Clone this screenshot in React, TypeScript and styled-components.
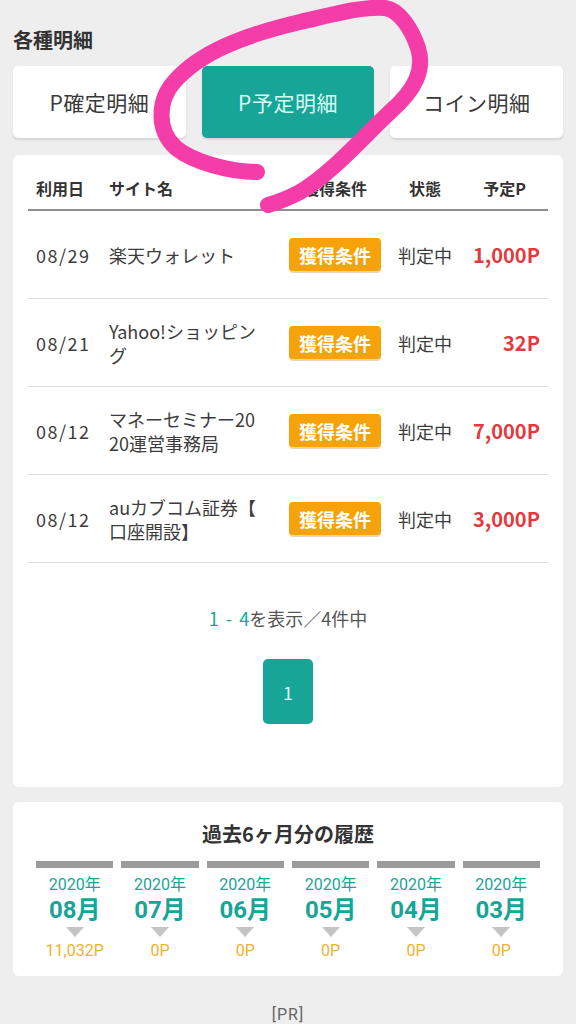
import React from "react";
import styled, { createGlobalStyle } from "styled-components";

const GlobalStyle = createGlobalStyle`
  html, body {
    margin: 0;
    padding: 0;
    background: #eeeeee;
  }
  body {
    font-family: "Noto Sans CJK JP", "Noto Sans", sans-serif;
    color: #333;
  }
  * { box-sizing: border-box; }
`;

const TEAL = "#17a597";
const COMPACT = `Roboto, "Noto Sans CJK JP", sans-serif`;

const Page = styled.div`
  position: relative;
  width: 576px;
  min-height: 1024px;
  padding: 22px 13px 0;
  overflow: hidden;
`;

const SectionTitle = styled.h2`
  margin: 0 0 8px;
  font-size: 20px;
  line-height: 36px;
  font-weight: 700;
  color: #333;
`;

const Tabs = styled.div`
  display: grid;
  grid-template-columns: repeat(3, 1fr);
  gap: 16px;
  margin-bottom: 17px;
`;

const Tab = styled.div<{ $active?: boolean }>`
  height: 72px;
  display: flex;
  align-items: center;
  justify-content: center;
  border-radius: 5px;
  background: ${(p) => (p.$active ? TEAL : "#fff")};
  color: ${(p) => (p.$active ? "#d9fbf4" : "#3a3a3a")};
  font-size: 21px;
  letter-spacing: 0.5px;
  box-shadow: 0 2px 2px rgba(0, 0, 0, 0.1);
`;

const Card = styled.div`
  background: #fff;
  border-radius: 6px;
  padding: 0 15px 63px;
`;

const cols = "81px 172px 108px 72px 1fr";

const HeadRow = styled.div`
  display: grid;
  grid-template-columns: ${cols};
  padding: 22px 0 10px;
  border-bottom: 2px solid #8e8e8e;
  font-size: 16px;
  line-height: 22px;
  font-weight: 700;
  color: #333;
`;

const HeadCell = styled.div<{ $align?: string }>`
  text-align: ${(p) => p.$align || "left"};
  padding-left: ${(p) => (p.$align === "left" || !p.$align ? "8px" : "0")};
  &:nth-child(2) { padding-left: 0; }
`;

const Row = styled.div`
  display: grid;
  grid-template-columns: ${cols};
  align-items: center;
  height: 88px;
  border-bottom: 1px solid #dcdcdc;
  color: #3c3c3c;
`;

const DateCell = styled.div`
  padding-left: 8px;
  font-size: 18px;
  letter-spacing: 1.5px;
`;

const SiteCell = styled.div`
  padding-right: 22px;
  font-size: 18px;
  line-height: 24px;
  word-break: break-all;
  line-break: anywhere;
`;

const BadgeCell = styled.div`
  display: flex;
  justify-content: center;
`;

const Badge = styled.span`
  display: inline-flex;
  align-items: center;
  justify-content: center;
  width: 92px;
  height: 33px;
  border-radius: 4px;
  background: #f6a30b;
  color: #fff;
  font-size: 18px;
  font-weight: 700;
  box-shadow: 0 2px 1px rgba(150, 110, 40, 0.3);
`;

const StatusCell = styled.div`
  text-align: center;
  font-size: 18px;
`;

const PointCell = styled.div`
  text-align: right;
  padding-right: 8px;
  font-size: 20px;
  font-weight: 700;
  color: #e4393f;
`;

const Summary = styled.div`
  margin-top: 43px;
  text-align: center;
  font-size: 18px;
  line-height: 24px;
  color: #555;
`;

const Accent = styled.span`
  color: ${TEAL};
  word-spacing: 3px;
`;

const Pager = styled.div`
  display: flex;
  justify-content: center;
  margin-top: 29px;
`;

const PageButton = styled.div`
  width: 50px;
  height: 65px;
  border-radius: 5px;
  background: ${TEAL};
  color: #d9fbf4;
  font-size: 18px;
  display: flex;
  align-items: center;
  justify-content: center;
`;

const HistoryCard = styled.div`
  margin-top: 15px;
  background: #fff;
  border-radius: 6px;
  padding: 18px 23px 15px;
`;

const HistoryTitle = styled.div`
  text-align: center;
  font-size: 20px;
  line-height: 28px;
  font-weight: 700;
  color: #333;
  margin-bottom: 13px;
`;

const Months = styled.div`
  display: grid;
  grid-template-columns: repeat(6, 1fr);
  gap: 8px;
  font-family: ${COMPACT};
`;

const Month = styled.div`
  display: flex;
  flex-direction: column;
  align-items: center;
`;

const Bar = styled.div`
  align-self: stretch;
  height: 7px;
  background: #9b9b9b;
  margin-bottom: 8px;
`;

const Year = styled.div`
  font-size: 16px;
  line-height: 18px;
  color: ${TEAL};
`;

const MonthLabel = styled.div`
  margin-top: 2px;
  font-size: 24px;
  line-height: 28px;
  font-weight: 700;
  color: ${TEAL};
`;

const Arrow = styled.div`
  width: 0;
  height: 0;
  margin-top: 3px;
  border-left: 9px solid transparent;
  border-right: 9px solid transparent;
  border-top: 10px solid #c4c4c4;
`;

const MonthPoint = styled.div`
  margin-top: 4px;
  font-size: 16px;
  line-height: 20px;
  color: #f0b12f;
`;

const PR = styled.div`
  margin-top: 31px;
  text-align: center;
  font-family: ${COMPACT};
  font-size: 16px;
  line-height: 16px;
  color: #666;
  letter-spacing: 1px;
`;

const Annotation = styled.svg`
  position: absolute;
  left: 0;
  top: 0;
  width: 576px;
  height: 230px;
  pointer-events: none;
`;

const rows = [
  { date: "08/29", site: "楽天ウォレット", point: "1,000P" },
  { date: "08/21", site: "Yahoo!ショッピング", point: "32P" },
  { date: "08/12", site: "マネーセミナー2020運営事務局", point: "7,000P" },
  { date: "08/12", site: "auカブコム証券【口座開設】", point: "3,000P" },
];

const months = [
  { m: "08月", p: "11,032P" },
  { m: "07月", p: "0P" },
  { m: "06月", p: "0P" },
  { m: "05月", p: "0P" },
  { m: "04月", p: "0P" },
  { m: "03月", p: "0P" },
];

export default function App() {
  return (
    <>
      <GlobalStyle />
      <Page>
        <SectionTitle>各種明細</SectionTitle>
        <Tabs>
          <Tab>P確定明細</Tab>
          <Tab $active>P予定明細</Tab>
          <Tab>コイン明細</Tab>
        </Tabs>
        <Card>
          <HeadRow>
            <HeadCell>利用日</HeadCell>
            <HeadCell>サイト名</HeadCell>
            <HeadCell $align="center">獲得条件</HeadCell>
            <HeadCell $align="center">状態</HeadCell>
            <HeadCell $align="center">予定P</HeadCell>
          </HeadRow>
          {rows.map((r, i) => (
            <Row key={i}>
              <DateCell>{r.date}</DateCell>
              <SiteCell>{r.site}</SiteCell>
              <BadgeCell>
                <Badge>獲得条件</Badge>
              </BadgeCell>
              <StatusCell>判定中</StatusCell>
              <PointCell>{r.point}</PointCell>
            </Row>
          ))}
          <Summary>
            <Accent>1 - 4</Accent>を表示／4件中
          </Summary>
          <Pager>
            <PageButton>1</PageButton>
          </Pager>
        </Card>
        <HistoryCard>
          <HistoryTitle>過去6ヶ月分の履歴</HistoryTitle>
          <Months>
            {months.map((x) => (
              <Month key={x.m}>
                <Bar />
                <Year>2020年</Year>
                <MonthLabel>{x.m}</MonthLabel>
                <Arrow />
                <MonthPoint>{x.p}</MonthPoint>
              </Month>
            ))}
          </Months>
        </HistoryCard>
        <PR>[PR]</PR>
        <Annotation viewBox="0 0 576 230">
          <path
            d="M257,172 C230,172 193,162 176,148 C156,130 158,100 174,82 C200,52 245,35 300,22 C335,14 365,6 385,8 C400,10 412,30 418,48 C425,70 415,90 390,112 C365,135 330,175 300,192 C285,200 275,203 268,205"
            fill="none"
            stroke="#f43da8"
            strokeWidth="16"
            strokeLinecap="round"
            strokeLinejoin="round"
          />
        </Annotation>
      </Page>
    </>
  );
}
